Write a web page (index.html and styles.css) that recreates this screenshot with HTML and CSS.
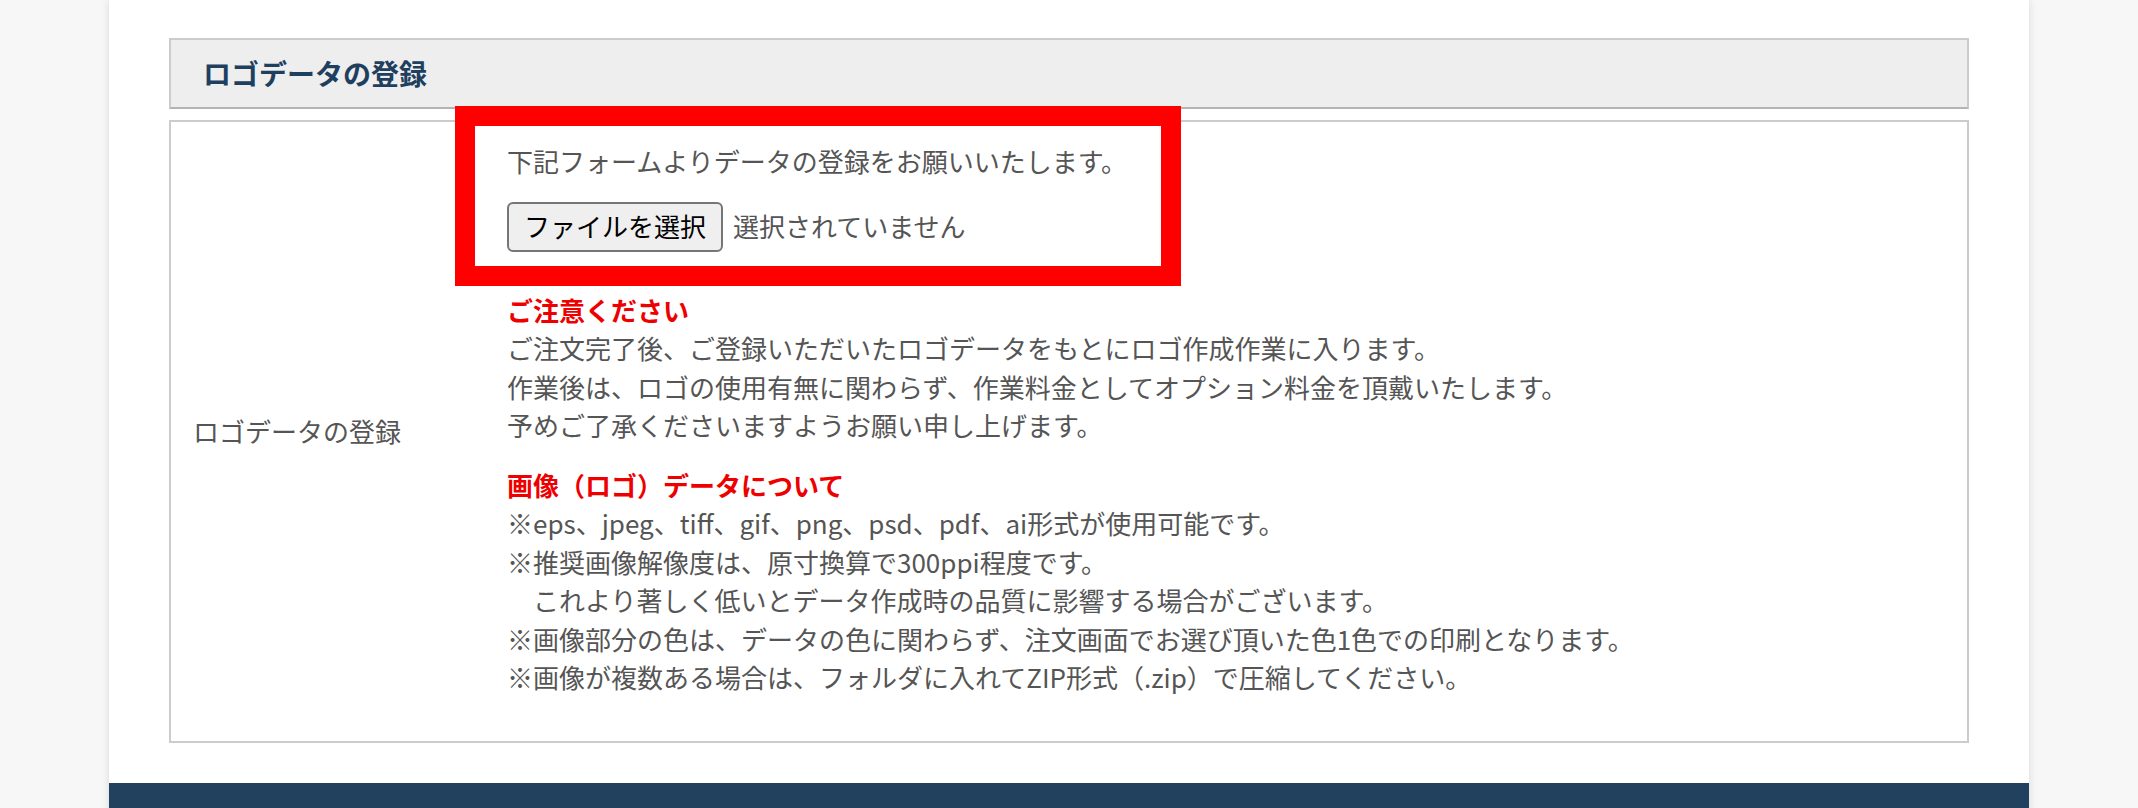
FILE: index.html
```html
<!DOCTYPE html>
<html lang="ja">
<head>
    <meta charset="utf-8">
    <title>ロゴデータの登録</title>
    <link rel="stylesheet" href="styles.css">
</head>
<body>
    <div class="page">
        <section class="entry">
            <h2 class="entry-title">ロゴデータの登録</h2>
            <div class="entry-table">
                <div class="entry-label">ロゴデータの登録</div>
                <div class="entry-body">
                    <div class="upload">
                        <p class="upload-lead">下記フォームよりデータの登録をお願いいたします。</p>
                        <div class="file-field">
                            <span class="file-button">ファイルを選択</span>
                            <span class="file-status">選択されていません</span>
                        </div>
                    </div>

                    <div class="note first">
                        <p class="note-title">ご注意ください</p>
                        <p>ご注文完了後、ご登録いただいたロゴデータをもとにロゴ作成作業に入ります。<br>
                        作業後は、ロゴの使用有無に関わらず、作業料金としてオプション料金を頂戴いたします。<br>
                        予めご了承くださいますようお願い申し上げます。</p>
                    </div>

                    <div class="note">
                        <p class="note-title">画像（ロゴ）データについて</p>
                        <p>※eps、jpeg、tiff、gif、png、psd、pdf、ai形式が使用可能です。<br>
                        ※推奨画像解像度は、原寸換算で300ppi程度です。<br>
                        　これより著しく低いとデータ作成時の品質に影響する場合がございます。<br>
                        ※画像部分の色は、データの色に関わらず、注文画面でお選び頂いた色1色での印刷となります。<br>
                        ※画像が複数ある場合は、フォルダに入れてZIP形式（.zip）で圧縮してください。</p>
                    </div>
                </div>
            </div>
        </section>
        <footer class="site-footer"></footer>
    </div>
</body>
</html>
```

FILE: styles.css
```css
body {
    margin: 0;
    background: #f7f7f7;
    font-family: "Noto Sans CJK JP", "Noto Sans", sans-serif;
    color: #555;
}
p {
    margin: 0;
}
.page {
    width: 1920px;
    margin: 0 auto;
    background: #fff;
    box-shadow: 0 0 8px rgba(0, 0, 0, 0.12);
}
.entry {
    padding: 38px 60px 40px;
}
.entry-title {
    margin: 0 0 11px;
    padding: 12px 32px 13px;
    background: #eeeeee;
    border: 2px solid #cccccc;
    border-bottom-color: #b4b4b4;
    color: #1f3f5f;
    font-size: 28px;
    line-height: 42px;
    font-weight: bold;
}
.entry-table {
    display: grid;
    grid-template-columns: 304px 1fr;
    border: 2px solid #cccccc;
    font-size: 26px;
    line-height: 38.5px;
}
.entry-label {
    display: flex;
    align-items: center;
    padding: 0 22px;
}
.entry-body {
    padding: 20px 32px 44px;
}
.upload {
    position: relative;
}
/* red frame marking the upload form */
.upload::before {
    content: "";
    position: absolute;
    top: -36px;
    left: -52px;
    width: 726px;
    height: 180px;
    box-sizing: border-box;
    border: 20px solid #ff0000;
}
.upload-lead {
    margin-bottom: 21px;
}
.file-field {
    display: flex;
    align-items: center;
    gap: 10px;
}
.file-button {
    display: inline-flex;
    align-items: center;
    height: 50px;
    box-sizing: border-box;
    padding: 0 15px;
    background: #efefef;
    border: 2px solid #767676;
    border-radius: 6px;
    color: #000;
}
.note {
    margin-top: 21px;
}
.note.first {
    margin-top: 39px;
}
.note-title {
    color: #ee0000;
    font-weight: bold;
}
.site-footer {
    height: 200px;
    background: #21415f;
}
```
